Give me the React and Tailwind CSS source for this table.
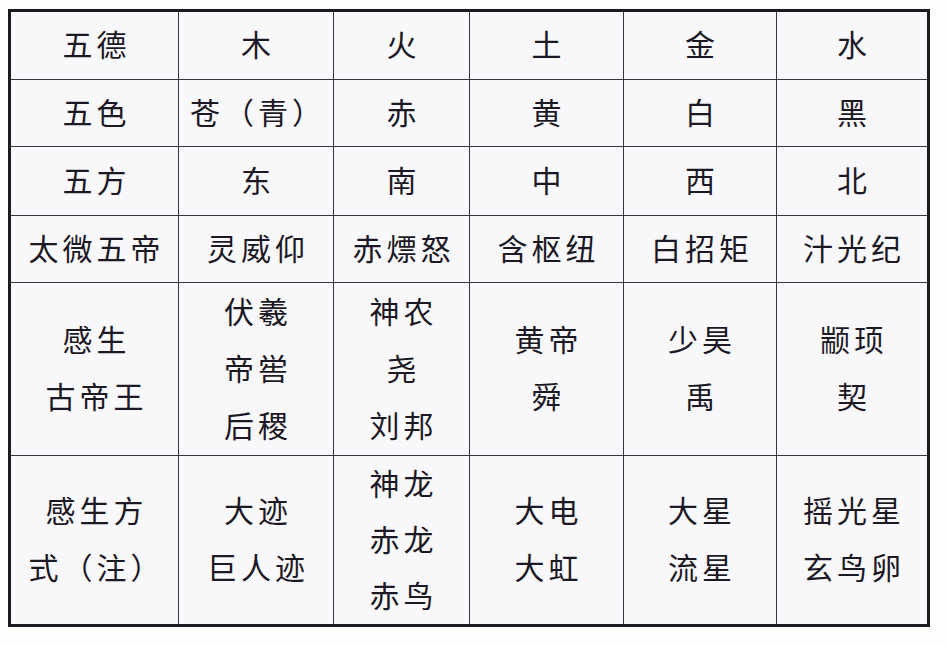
const rows = [
  ['五德', '木', '火', '土', '金', '水'],
  ['五色', '苍（青）', '赤', '黄', '白', '黑'],
  ['五方', '东', '南', '中', '西', '北'],
  ['太微五帝', '灵威仰', '赤熛怒', '含枢纽', '白招矩', '汁光纪'],
  [['感生', '古帝王'], ['伏羲', '帝喾', '后稷'], ['神农', '尧', '刘邦'], ['黄帝', '舜'], ['少昊', '禹'], ['颛顼', '契']],
  [['感生方', '式（注）'], ['大迹', '巨人迹'], ['神龙', '赤龙', '赤鸟'], ['大电', '大虹'], ['大星', '流星'], ['摇光星', '玄鸟卵']],
]

function Cell({ value }) {
  const lines = Array.isArray(value) ? value : [value]
  return (
    <div className="flex flex-col items-center justify-center bg-[#f8f8fb]">
      {lines.map((line, i) => (
        <div key={i} className="h-[57px] flex items-center justify-center tracking-[4px] pl-[4px] pb-[5px] whitespace-nowrap">
          {line}
        </div>
      ))}
    </div>
  )
}

export default function App() {
  return (
    <div
      className="w-[948px] h-[646px] bg-[#fdfdfe] pt-[9px] pl-[8px] text-[30px] leading-none text-[#1d1924]"
      style={{ fontFamily: '"Noto Sans CJK SC", "Noto Sans", sans-serif' }}
    >
      <div className="w-[922px] h-[618px] border-[3px] border-[#1b1a20] bg-[#3b3446]">
        <div className="grid h-full gap-px grid-cols-[167px_154px_135px_153px_152px_150px] grid-rows-[67px_66px_68px_66px_172px_168px]">
          {rows.flatMap((row, r) => row.map((value, c) => <Cell key={`${r}-${c}`} value={value} />))}
        </div>
      </div>
    </div>
  )
}
